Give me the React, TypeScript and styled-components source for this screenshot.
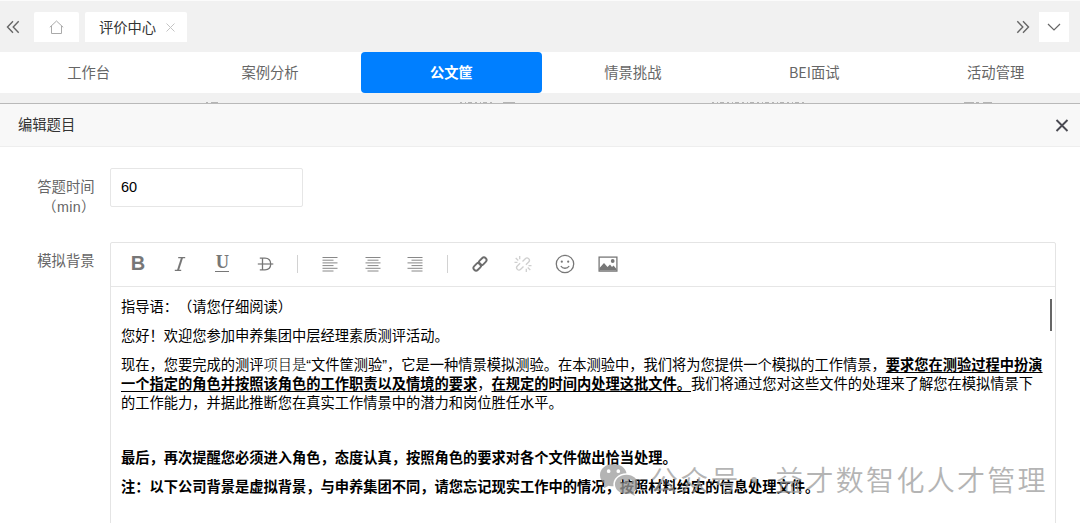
import React from 'react';
import styled, { createGlobalStyle } from 'styled-components';

const Global = createGlobalStyle`
  * { box-sizing: border-box; }
  html, body { margin: 0; background: #fff; }
  body {
    width: 1080px; height: 523px; overflow: hidden;
    font-family: "Liberation Sans", "Noto Sans CJK SC", sans-serif;
    font-size: 14.3px; color: #666; text-spacing-trim: space-all;
  }
`;

const Page = styled.div`
  position: relative; width: 1080px; height: 523px; overflow: hidden;
  display: flex; flex-direction: column; background: #fff;
`;
const TopBar = styled.div`
  flex: none; height: 52px; padding: 11px 11px 0 6px; border-top: 1px solid #fbfbfb;
  background: #f1f1f1; display: flex; align-items: flex-start;
`;
const BarIcon = styled.div<{ $w: number }>`
  width: ${p => p.$w}px; height: 30px; display: flex; align-items: center;
`;
const PageTab = styled.div<{ $w: number }>`
  width: ${p => p.$w}px; height: 30px; margin-right: 6px; background: #fff; border-radius: 2px 2px 0 0;
  display: flex; align-items: center; justify-content: center; gap: 10px; color: #333;
`;
const TabTitle = styled.span`padding: 0 0 2px 2px;`;
const Spacer = styled.div`flex: 1;`;
const MoreButton = styled.div`
  width: 30px; height: 30px; background: #fff; display: flex; align-items: center; justify-content: center;
`;
const Nav = styled.div`
  flex: none; height: 41px; margin: 0 -7px 0 -2px; background: #fff;
  display: grid; grid-template-columns: repeat(6, 181.4px);
  font-family: "Noto Sans CJK SC", sans-serif;
`;
const NavItem = styled.div<{ $active?: boolean }>`
  display: flex; align-items: center; justify-content: center; line-height: 20px;
  padding-bottom: 2px; border-radius: 4px;
  background: ${p => (p.$active ? '#007fff' : 'transparent')};
  color: ${p => (p.$active ? '#fff' : '#666')};
  font-weight: ${p => (p.$active ? 700 : 400)};
`;
const Strip = styled.div`
  flex: none; height: 11px; background: #f1f1f1; border-bottom: 1px solid #b9b9b9;
  display: flex; align-items: flex-end;
`;
const PanelHead = styled.div`
  flex: none; height: 43px; padding: 0 11px 0 18px; background: #f8f8f8; border-bottom: 1px solid #eee;
  display: flex; align-items: center; justify-content: space-between; color: #333;
`;
const PanelTitle = styled.span`padding-bottom: 3px;`;
const Form = styled.div`
  padding: 21px 24px 0 20px; display: flex; flex-direction: column; gap: 25px;
`;
const Field = styled.div`display: flex; align-items: flex-start;`;
const Label = styled.div`
  width: 74.5px; margin-right: 15.5px; padding-top: 9px; text-align: right; line-height: 20px; white-space: nowrap;
`;
const Unit = styled.div`letter-spacing: .3px; margin-right: -1px;`;
const Input = styled.div`
  width: 193px; height: 39px; padding: 0 10px 2px; border: 1px solid #e6e6e6; border-radius: 2px;
  display: flex; align-items: center; color: #000; font-size: 14.5px;
`;
const Editor = styled.div`
  width: 946px; height: 300px; border: 1px solid #e4e4e4; border-radius: 2px;
`;
const Toolbar = styled.div`
  height: 44px; padding: 0 0 2px 6px; border-bottom: 1px solid #e6e6e6; display: flex; align-items: center;
`;
const Tool = styled.div<{ $w?: number }>`
  width: ${p => p.$w ?? 42.7}px; height: 40px; display: flex; align-items: center; justify-content: center;
`;
const BoldGlyph = styled.span`
  font: 700 20px/20px "Liberation Sans", sans-serif; color: #777; padding-bottom: 1px;
`;
const UnderlineGlyph = styled.span`
  width: 14px; height: 17px; border-bottom: 1.5px solid #777; text-align: center;
  font: 700 18.5px/15px "Liberation Serif", serif; color: #777;
`;
const Divider = styled.div`
  width: 1px; height: 18px; background: #d2d2d2; margin: 0 10.5px;
`;
const Content = styled.div`
  position: relative; padding: 11px 0 0 10px; color: #000; font-size: 14.25px; line-height: 19px; white-space: nowrap;
`;
const Para = styled.p<{ $bold?: boolean; $h?: number }>`
  margin: 0 0 10px; height: ${p => (p.$h ? `${p.$h}px` : 'auto')};
  font-weight: ${p => (p.$bold ? 700 : 400)};
`;
const Key = styled.span`
  font-weight: 700; text-decoration: underline; text-underline-offset: 2px; text-decoration-thickness: 1px;
`;
const Song = styled.span`
  font-weight: 300; line-height: 0; font-family: "Noto Serif CJK SC", "Noto Sans CJK SC", serif;
`;
const Thumb = styled.div`
  position: absolute; right: 3px; top: 12px; width: 2px; height: 32px; background: #666;
`;
const Watermark = styled.div`
  position: absolute; left: 599px; top: 459px; display: flex; align-items: center; height: 40px;
  color: #9c9c9c; opacity: .75; font-family: "Noto Sans CJK SC", sans-serif; font-size: 28px; white-space: nowrap;
`;
const MarkText = styled.span<{ $l: number }>`
  margin-left: ${p => p.$l}px; letter-spacing: 2.3px; font-weight: 350;
`;

const Chevrons = ({ flip }: { flip?: boolean }) => (
  <svg width="14" height="14" viewBox="0 0 14 14" fill="none" stroke="#666" strokeWidth="1.4"
    transform={flip ? 'scale(-1 1)' : undefined}>
    <path d="M7 1.300 1.500 7 7 12.700M12.700 1.300 7.200 7l5.500 5.700" />
  </svg>
);

const Align = ({ kind }: { kind: 'left' | 'center' | 'right' }) => (
  <svg width="16" height="16" viewBox="0 0 16 16" stroke="#888" strokeWidth="1">
    {[15, 11, 15, 11, 15, 11].map((w, i) => {
      const x = kind === 'left' ? 0.5 : kind === 'center' ? (16 - w) / 2 : 15.5 - w;
      return <path key={i} d={`M${x} ${1.5 + i * 2.7}h${w}`} />;
    })}
  </svg>
);

const Tools = () => (
  <Toolbar>
    <Tool $w={42}><BoldGlyph>B</BoldGlyph></Tool>
    <Tool $w={42}>
      <svg width="14" height="16" viewBox="0 0 14 16" fill="none" stroke="#777">
        <path d="M5.200 1.700h7M1.800 14.300h6.400" strokeWidth="1.200" /><path d="M9 1.700 5 14.300" strokeWidth="2" />
      </svg>
    </Tool>
    <Tool><UnderlineGlyph>U</UnderlineGlyph></Tool>
    <Tool $w={43}>
      <svg width="17" height="16" viewBox="0 0 17 16" fill="none" stroke="#777">
        <path d="M2.800 2.200H8c3.800 0 5.700 2 5.700 5.800S11.800 13.800 8 13.800H2.800M5.500 2.200v11.600" strokeWidth="1.300" />
        <path d="M.8 8h15.500" strokeWidth="1.200" />
      </svg>
    </Tool>
    <Divider />
    <Tool><Align kind="left" /></Tool>
    <Tool><Align kind="center" /></Tool>
    <Tool><Align kind="right" /></Tool>
    <Divider />
    <Tool>
      <svg width="16" height="16" viewBox="0 0 16 16" fill="none" stroke="#6d6d6d" strokeWidth="1.900">
        <rect x="-4.300" y="-2.600" width="8.600" height="5.200" rx="2.600" transform="translate(10.700 5.300) rotate(-45)" />
        <rect x="-4.300" y="-2.600" width="8.600" height="5.200" rx="2.600" transform="translate(5.300 10.700) rotate(-45)" />
      </svg>
    </Tool>
    <Tool>
      <svg width="18" height="18" viewBox="0 0 18 18" fill="none" stroke="#cfcfcf" strokeWidth="1.300">
        <path d="m8.500 6.500 2.800-2.800a2.300 2.300 0 0 1 3.400 3.300l-2.800 2.800M9.500 11.500l-2.800 2.800a2.300 2.300 0 0 1-3.400-3.300l2.800-2.800" />
        <path d="M5.700 1v3.300M1.700 3l2.600 2.400M.5 7.300h3M12.300 13.700V17M13.700 12.600l2.600 2.400M14.500 10.700h3" />
      </svg>
    </Tool>
    <Tool>
      <svg width="20" height="20" viewBox="0 0 20 20" fill="none" stroke="#777" strokeWidth="1.300">
        <circle cx="10" cy="10" r="8.700" /><path d="M5.800 12c2 3 6.400 3 8.400 0" />
        <circle cx="6.800" cy="7.700" r="1.100" fill="#777" stroke="none" />
        <circle cx="13.200" cy="7.700" r="1.100" fill="#777" stroke="none" />
      </svg>
    </Tool>
    <Tool>
      <svg width="20" height="16" viewBox="0 0 20 16" fill="none">
        <rect x="1.100" y="1.100" width="17.800" height="14" stroke="#777" strokeWidth="1.300" />
        <path d="M1.500 14.500V12L6 7l3.500 4L12 8.500l2 2.500 1.500-1.500L18.500 13v1.500z" fill="#777" />
        <circle cx="14.700" cy="5" r="1.900" fill="#777" />
      </svg>
    </Tool>
  </Toolbar>
);

const tabs = ['工作台', '案例分析', '公文筐', '情景挑战', 'BEI面试', '活动管理'];

export default function App() {
  return (
    <Page>
      <Global />
      <TopBar>
        <BarIcon $w={28}><Chevrons /></BarIcon>
        <PageTab $w={45}>
          <svg width="16" height="16" viewBox="0 0 16 16" fill="none" stroke="#aaa" strokeWidth="1">
            <path d="M.8 8.300 7.500 2l6.700 6.300M2.500 7v7.500h10V7" />
          </svg>
        </PageTab>
        <PageTab $w={102}>
          <TabTitle>评价中心</TabTitle>
          <svg width="9" height="9" viewBox="0 0 9 9" stroke="#c4c4c4" strokeWidth="1"><path d="m.5.5 8 8m0-8-8 8" /></svg>
        </PageTab>
        <Spacer />
        <BarIcon $w={23}><Chevrons flip /></BarIcon>
        <MoreButton>
          <svg width="14" height="8" viewBox="0 0 14 8" fill="none" stroke="#666" strokeWidth="1.200"><path d="m1 1 6 6 6-6" /></svg>
        </MoreButton>
      </TopBar>
      <Nav>{tabs.map(t => <NavItem key={t} $active={t === '公文筐'}>{t}</NavItem>)}</Nav>
      <Strip>
        <svg width="1080" height="2" viewBox="0 0 1080 2" stroke="#b4b4b4" strokeWidth="1">
          <path d="M206 1.500h2M211 1.500h7M964 1.500h10M976 1.500h3M983 1.500h9" />
          <path d="M460 1.500h34M712 1.500h92" strokeDasharray="2 3 1 2 4 3" />
          <path d="M503 1.500h12" />
        </svg>
      </Strip>
      <PanelHead>
        <PanelTitle>编辑题目</PanelTitle>
        <svg width="14" height="14" viewBox="0 0 14 14" stroke="#4a4a52" strokeWidth="1.900"><path d="m1.500 2 11 11m0-11-11 11" /></svg>
      </PanelHead>
      <Form>
        <Field>
          <Label>答题时间<Unit>（min）</Unit></Label>
          <Input>60</Input>
        </Field>
        <Field>
          <Label>模拟背景</Label>
          <Editor>
            <Tools />
            <Content>
              <Para>指导语：（请您仔细阅读）</Para>
              <Para>您好！欢迎您参加申养集团中层经理素质测评活动。</Para>
              <Para>
                现在，您要完成的测评<Song>项目是</Song>“文件筐测验”，它是一种情景模拟测验。在本测验中，我们将为您提供一个模拟的工作情景，<Key>要求您在测验过程中扮演</Key><br />
                <Key>一个指定的角色并按照该角色的工作职责以及情境的要求</Key>，<Key>在规定的时间内处理这批文件。</Key>我们将通过您对这些文件的处理来了解您在模拟情景下<br />
                的工作能力，并据此推断您在真实工作情景中的潜力和岗位胜任水平。
              </Para>
              <Para $h={16} />
              <Para $bold>最后，再次提醒您必须进入角色，态度认真，按照角色的要求对各个文件做出恰当处理。</Para>
              <Para $bold>注：以下公司背景是虚拟背景，与申养集团不同，请您忘记现实工作中的情况，按照材料给定的信息处理文件。</Para>
              <Thumb />
            </Content>
          </Editor>
        </Field>
      </Form>
      <Watermark>
        <svg width="42" height="36" viewBox="0 0 43.500 37">
          <path fill="#9c9c9c" fillRule="evenodd" d="M15 3C7 3 1 8 1 14.500c0 3.700 2 6.700 5 8.800L5 28l5-2.600c1.600.5 3.300.7 5 .7-1.200-7.500 5-13.500 13.500-13.600C27.500 7 22 3 15 3zM10 8.500a1.900 1.900 0 1 0 0 3.800 1.900 1.900 0 0 0 0-3.800zm10 0a1.900 1.900 0 1 0 0 3.800 1.900 1.900 0 0 0 0-3.800z" />
          <path fill="#9c9c9c" fillRule="evenodd" d="M28.500 14C21.500 14 16.500 18.500 16.500 24s5 10 12 10c1.500 0 3-.2 4.200-.6L37 36l-1-4c2.600-1.900 4.300-4.600 4.300-8 0-5.500-5-10-11.800-10zM24.500 19a1.600 1.600 0 1 0 0 3.200 1.600 1.600 0 0 0 0-3.200zm8 0a1.600 1.600 0 1 0 0 3.200 1.600 1.600 0 0 0 0-3.200z" />
        </svg>
        <MarkText $l={9}>公众号</MarkText>
        <MarkText $l={-1}>·</MarkText>
        <MarkText $l={5}>益才数智化人才管理</MarkText>
      </Watermark>
    </Page>
  );
}
